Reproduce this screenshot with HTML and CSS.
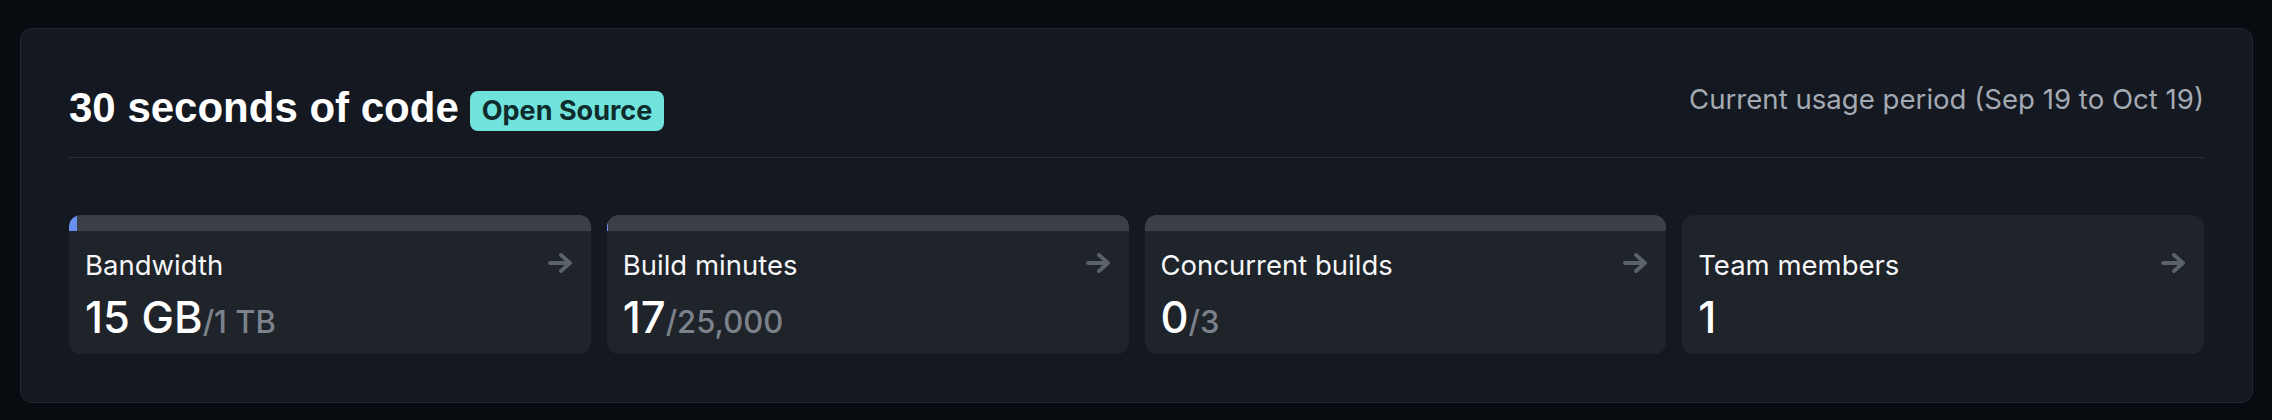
FILE: index.html
```html
<!DOCTYPE html>
<html lang="en">
<head>
<meta charset="utf-8">
<title>Usage</title>
<link rel="stylesheet" href="styles.css">
</head>
<body>
<section class="card">
  <header class="head">
    <div class="title-group">
      <h1 class="title">30 seconds of code</h1>
      <span class="badge">Open Source</span>
    </div>
    <p class="period">Current usage period (Sep 19 to Oct 19)</p>
  </header>
  <div class="stats">
    <div class="stat">
      <div class="bar"><div class="fill" style="width:1.5%"></div></div>
      <div class="stat-body">
        <div class="label-row"><span class="label">Bandwidth</span><svg class="arrow" viewBox="0 0 24 20" width="24" height="20"><path d="M2 10H22M13 2L22 10L13 18"/></svg></div>
        <div class="value">15 GB<span class="sub">/1 TB</span></div>
      </div>
    </div>
    <div class="stat">
      <div class="bar"><div class="fill" style="width:0.2%"></div></div>
      <div class="stat-body">
        <div class="label-row"><span class="label">Build minutes</span><svg class="arrow" viewBox="0 0 24 20" width="24" height="20"><path d="M2 10H22M13 2L22 10L13 18"/></svg></div>
        <div class="value">17<span class="sub">/25,000</span></div>
      </div>
    </div>
    <div class="stat">
      <div class="bar"><div class="fill" style="width:0%"></div></div>
      <div class="stat-body">
        <div class="label-row"><span class="label">Concurrent builds</span><svg class="arrow" viewBox="0 0 24 20" width="24" height="20"><path d="M2 10H22M13 2L22 10L13 18"/></svg></div>
        <div class="value">0<span class="sub">/3</span></div>
      </div>
    </div>
    <div class="stat">
      <div class="bar bar-empty"></div>
      <div class="stat-body">
        <div class="label-row"><span class="label">Team members</span><svg class="arrow" viewBox="0 0 24 20" width="24" height="20"><path d="M2 10H22M13 2L22 10L13 18"/></svg></div>
        <div class="value">1</div>
      </div>
    </div>
  </div>
</section>
</body>
</html>
```

FILE: styles.css
```css
* { box-sizing: border-box; }

html, body {
  margin: 0;
  background: #080b10;
}

body {
  padding: 28px 19px 17px 20px;
  font-family: Inter, "Noto Sans", sans-serif;
  color: #f3f4f6;
}

.card {
  background: #141820;
  border: 1px solid #23272e;
  border-radius: 12px;
  padding: 48px;
}

.head {
  display: flex;
  justify-content: space-between;
  align-items: flex-start;
  padding-top: 7px;
  padding-bottom: 25px;
  border-bottom: 1px solid #2b2f37;
}

.title-group {
  display: flex;
  align-items: flex-end;
  gap: 11px;
}

.title {
  margin: 0;
  font-family: "Liberation Sans", Arial, sans-serif;
  font-weight: 700;
  font-size: 42px;
  line-height: 48px;
  color: #ffffff;
}

.badge {
  display: inline-block;
  margin-bottom: 1px;
  background: #6fe3dc;
  color: #0f2b2c;
  font-family: Inter, sans-serif;
  font-weight: 700;
  font-size: 27px;
  line-height: 31px;
  padding: 4px 12px 5px;
  border-radius: 8px;
}

.period {
  margin: -1px 0 0 0;
  font-size: 27.6px;
  line-height: 33px;
  color: #a4aab3;
}

.stats {
  margin-top: 57px;
  display: grid;
  grid-template-columns: repeat(4, 1fr);
  gap: 16px;
}

.stat {
  background: #1f232a;
  border-radius: 12px;
  overflow: hidden;
  height: 139px;
}

.bar {
  height: 16px;
  background: #3b4048;
}

.bar-empty {
  background: transparent;
}

.fill {
  height: 100%;
  background: #6a8df0;
}

.stat-body {
  padding: 18px 16px 13px 16px;
}

.label-row {
  display: flex;
  justify-content: space-between;
  align-items: center;
  height: 32px;
}

.label {
  font-size: 27.5px;
  line-height: 32px;
  color: #f5f6f7;
}

.arrow {
  margin-right: 3px;
  margin-top: -4px;
  fill: none;
  stroke: #5c626b;
  stroke-width: 3.8;
  stroke-linecap: round;
  stroke-linejoin: round;
}

.value {
  margin-top: 12px;
  font-size: 43.5px;
  line-height: 48px;
  font-weight: 500;
  color: #ffffff;
}

.sub {
  font-size: 31px;
  font-weight: 500;
  color: #7c828b;
}
```
